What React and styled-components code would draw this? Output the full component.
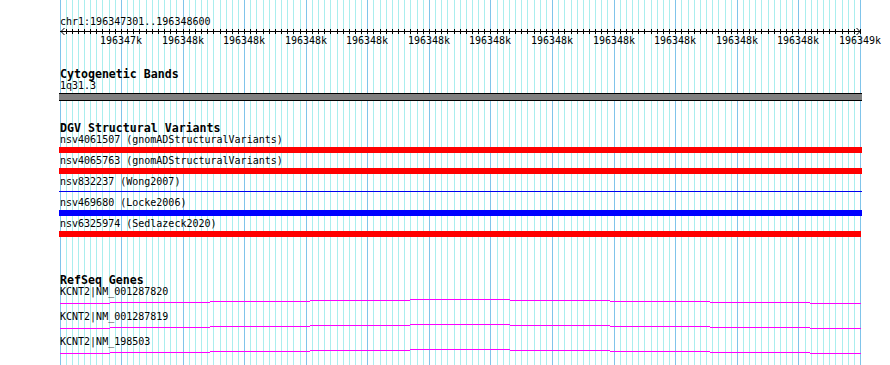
import React from 'react';
import styled, { createGlobalStyle } from 'styled-components';

const START = 196347301;
const END = 196348600;
const PAD = 60;
const SPAN = 800;
const SCALE = SPAN / (END - START);
const toX = (bp) => PAD + Math.round((bp - START) * SCALE);

/* round half to even, as the original sprintf("%.0f") does */
const roundEven = (v) => {
  const f = Math.floor(v);
  const d = v - f;
  if (d > 0.5) return f + 1;
  if (d < 0.5) return f;
  return f % 2 === 0 ? f : f + 1;
};

const MONO = '"DejaVu Sans Mono", "Liberation Mono", monospace';

const GlobalStyle = createGlobalStyle`
  html, body { margin: 0; padding: 0; background: #ffffff; }
  body { font-family: ${MONO}; color: #000; }
`;

const Page = styled.div`
  position: relative;
  width: 890px;
  height: 365px;
  overflow: hidden;
  background: #ffffff;
`;

const GridLayer = styled.svg`
  position: absolute;
  top: 0;
  left: 0;
  pointer-events: none;
  shape-rendering: crispEdges;
`;

const Panel = styled.div`
  position: relative;
  display: flex;
  flex-direction: column;
  padding-left: ${PAD}px;
`;

const RulerSection = styled.div`
  display: flex;
  flex-direction: column;
`;

const ChrLabel = styled.div`
  margin-top: 16px;
  font: 10px/12px ${MONO};
  height: 12px;
  white-space: nowrap;
`;

const ScaleSvg = styled.svg`
  display: block;
  shape-rendering: crispEdges;
`;

const ScaleText = styled.text`
  font-family: ${MONO};
  font-size: 10px;
  fill: #000;
`;

const Track = styled.section`
  display: flex;
  flex-direction: column;
  margin-top: ${(p) => p.$gap}px;
`;

const TrackTitle = styled.div`
  font: bold 11.6px/12px ${MONO};
  height: 12px;
  white-space: nowrap;
`;

const FeatureLabel = styled.div`
  font: 10px/12px ${MONO};
  height: 12px;
  white-space: nowrap;
`;

const FeatureRow = styled.div`
  display: flex;
  flex-direction: column;
`;

const BarLane = styled.div`
  display: flex;
  align-items: flex-start;
  height: ${(p) => p.$h}px;
  margin-top: 1px;
  margin-bottom: ${(p) => p.$mb}px;
`;

const Bar = styled.div`
  flex: none;
  background: ${(p) => p.$color};
  height: ${(p) => (p.$thin ? '1px' : '100%')};
  margin-top: ${(p) => (p.$thin ? '2px' : '0')};
`;

const CytoBar = styled.div`
  flex: none;
  box-sizing: border-box;
  height: 100%;
  background: #808080;
  border-top: 1px solid #000;
  border-bottom: 1px solid #000;
`;

const GeneSvg = styled.svg`
  display: block;
  shape-rendering: crispEdges;
`;

/* grid positions */
const gridLines = [{ x: PAD, major: true }];
for (let bp = 196347310; bp <= END; bp += 10) {
  gridLines.push({ x: toX(bp), major: bp % 100 === 0, bp });
}
const majors = gridLines.filter((g) => g.bp && g.major);

const dgv = [
  { label: 'nsv4061507 (gnomADStructuralVariants)', color: '#ff0000', x1: 59, x2: 862 },
  { label: 'nsv4065763 (gnomADStructuralVariants)', color: '#ff0000', x1: 59, x2: 862 },
  { label: 'nsv832237 (Wong2007)', color: '#0000ee', x1: 59, x2: 862, thin: true },
  { label: 'nsv469680 (Locke2006)', color: '#0000ff', x1: 59, x2: 862 },
  { label: 'nsv6325974 (Sedlazeck2020)', color: '#ff0000', x1: 59, x2: 861 },
];

const genes = ['KCNT2|NM_001287820', 'KCNT2|NM_001287819', 'KCNT2|NM_198503'];

/* intron "hat" as rasterised steps: boundaries and drop from peak */
const hatBounds = [60, 110, 210, 310, 410, 510, 610, 710, 810, 861];
const hatDrop = [4, 3, 2, 1, 0, 1, 2, 3, 4];

function Grid() {
  return (
    <GridLayer width="890" height="365" viewBox="0 0 890 365">
      {gridLines
        .filter((g) => !g.major)
        .map((g, i) => (
          <rect key={'m' + i} x={g.x} y="0" width="1" height="365" fill="#aaeeee" />
        ))}
      {gridLines
        .filter((g) => g.major)
        .map((g, i) => (
          <rect key={'M' + i} x={g.x} y="0" width="1" height="365" fill="#80c4ea" />
        ))}
    </GridLayer>
  );
}

function Ruler() {
  return (
    <RulerSection>
      <ChrLabel>chr1:196347301..196348600</ChrLabel>
      <ScaleSvg width="830" height="18" viewBox="0 0 830 18">
        <rect x="0" y="3" width="801" height="1" fill="#000" />
        {gridLines
          .filter((g) => g.bp)
          .map((g, i) => (
            <rect key={i} x={g.x - PAD} y="1" width="1" height="5" fill="#000" />
          ))}
        <path d="M4.5 0 L1 3.5 L4.5 7" stroke="#000" strokeWidth="1" fill="none" shapeRendering="auto" />
        <path d="M796.5 0 L800 3.5 L796.5 7" stroke="#000" strokeWidth="1" fill="none" shapeRendering="auto" />
        {majors.map((g, i) => (
          <ScaleText key={i} x={g.x - PAD} y="16" textAnchor="middle">
            {roundEven(g.bp / 1000)}k
          </ScaleText>
        ))}
      </ScaleSvg>
    </RulerSection>
  );
}

function HatLine() {
  return (
    <GeneSvg width="830" height="13" viewBox="0 0 830 13">
      {hatDrop.map((d, i) => (
        <rect
          key={i}
          x={hatBounds[i] - PAD}
          y={1 + d}
          width={hatBounds[i + 1] - hatBounds[i]}
          height="1"
          fill="#ff00ff"
        />
      ))}
    </GeneSvg>
  );
}

export default function App() {
  return (
    <>
      <GlobalStyle />
      <Page>
        <Grid />
        <Panel>
          <Ruler />

          <Track $gap={22}>
            <TrackTitle>Cytogenetic Bands</TrackTitle>
            <FeatureRow>
              <FeatureLabel>1q31.3</FeatureLabel>
              <BarLane $h={8} $mb={0}>
                <CytoBar style={{ marginLeft: 59 - PAD, width: 862 - 59 }} />
              </BarLane>
            </FeatureRow>
          </Track>

          <Track $gap={21}>
            <TrackTitle>DGV Structural Variants</TrackTitle>
            {dgv.map((f) => (
              <FeatureRow key={f.label}>
                <FeatureLabel>{f.label}</FeatureLabel>
                <BarLane $h={6} $mb={2}>
                  <Bar
                    $color={f.color}
                    $thin={f.thin}
                    style={{ marginLeft: f.x1 - PAD, width: f.x2 - f.x1 }}
                  />
                </BarLane>
              </FeatureRow>
            ))}
          </Track>

          <Track $gap={35}>
            <TrackTitle>RefSeq Genes</TrackTitle>
            {genes.map((g) => (
              <FeatureRow key={g}>
                <FeatureLabel>{g}</FeatureLabel>
                <HatLine />
              </FeatureRow>
            ))}
          </Track>
        </Panel>
      </Page>
    </>
  );
}
